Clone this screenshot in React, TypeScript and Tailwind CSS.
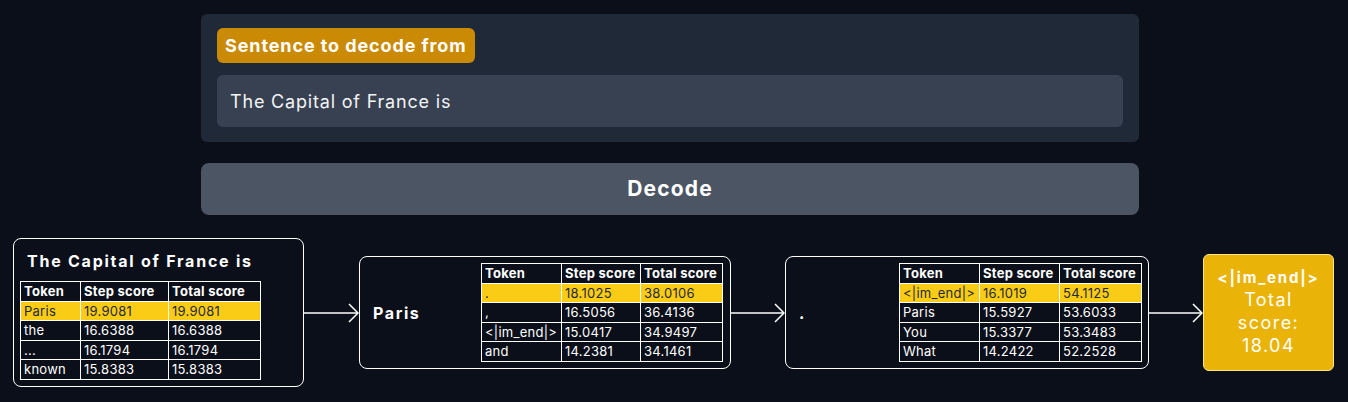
import React from "react"

type Row = [string, string, string]

const font = { fontFamily: "Inter, 'Noto Sans', sans-serif" }

function ScoreTable({ rows, widths }: { rows: Row[]; widths: [string, string, string] }) {
  return (
    <table className="w-fit table-fixed border-collapse text-[13px] leading-[18.6px] tracking-[0.02em]">
      <colgroup>
        <col className={widths[0]} />
        <col className={widths[1]} />
        <col className={widths[2]} />
      </colgroup>
      <thead>
        <tr>
          <th className="border border-white px-[3px] text-left font-bold text-white">Token</th>
          <th className="border border-white px-[3px] text-left font-bold text-white whitespace-nowrap">Step score</th>
          <th className="border border-white px-[3px] text-left font-bold text-white whitespace-nowrap">Total score</th>
        </tr>
      </thead>
      <tbody>
        {rows.map((r, i) => (
          <tr key={i} className={i === 0 ? "bg-[#facc15] text-[#1f2937]" : "text-white"}>
            {r.map((c, j) => (
              <td key={j} className="border border-white px-[3px] whitespace-nowrap">
                {c}
              </td>
            ))}
          </tr>
        ))}
      </tbody>
    </table>
  )
}

function Arrow({ w = 55 }: { w?: number }) {
  return (
    <svg width={w} height="20" viewBox={`0 0 ${w} 20`} className="shrink-0">
      <line x1="0" y1="10" x2={w - 1} y2="10" stroke="white" strokeWidth="1.3" />
      <polyline points={`${w - 10},1 ${w - 1},10 ${w - 10},19`} fill="none" stroke="white" strokeWidth="1.5" />
    </svg>
  )
}

export default function App() {
  return (
    <div className="min-h-[402px] w-full bg-[#0b0f19] pt-[14px]" style={font}>
      <div className="ml-[201px] w-[938px]">
        <div className="rounded-md bg-[#1f2937] px-4 pt-[14px] pb-[15px]">
          <div className="inline-flex h-[35px] items-center rounded-md bg-[#ca8a04] px-2 text-[18px] font-bold tracking-[0.05em] text-white">
            Sentence to decode from
          </div>
          <div className="mt-3 flex h-[52px] items-center rounded-md bg-[#374151] px-[13px] text-[18px] tracking-[0.045em] text-[#f3f4f6]">
            The Capital of France is
          </div>
        </div>
        <button className="mt-[21px] flex h-[52px] w-full items-center justify-center rounded-lg bg-[#4b5563] text-[21px] font-bold tracking-[0.055em] text-white">
          Decode
        </button>
      </div>

      <div className="mt-[23px] ml-[13px] flex items-center">
        <div className="flex h-[149px] w-[291px] flex-col items-start justify-end rounded-lg border border-white px-[6px] pb-[6px]">
          <div className="mb-[8px] pl-[7px] text-[16px] font-bold tracking-[0.11em] text-white">
            The Capital of France is
          </div>
          <ScoreTable
            widths={["w-[60px]", "w-[88px]", "w-[92px]"]}
            rows={[
              ["Paris", "19.9081", "19.9081"],
              ["the", "16.6388", "16.6388"],
              ["...", "16.1794", "16.1794"],
              ["known", "15.8383", "15.8383"],
            ]}
          />
        </div>

        <Arrow />

        <div className="flex h-[113px] w-[372px] items-center justify-between rounded-lg border border-white pr-[7px] pl-[13px]">
          <div className="text-[16px] font-bold tracking-[0.1em] text-white">Paris</div>
          <ScoreTable
            widths={["w-[80px]", "w-[79px]", "w-[82px]"]}
            rows={[
              [".", "18.1025", "38.0106"],
              [",", "16.5056", "36.4136"],
              ["<|im_end|>", "15.0417", "34.9497"],
              ["and", "14.2381", "34.1461"],
            ]}
          />
        </div>

        <Arrow w={54} />

        <div className="flex h-[113px] w-[364px] items-center justify-between rounded-lg border border-white pr-[6px] pl-[13px]">
          <div className="text-[16px] font-bold tracking-[0.08em] text-white">.</div>
          <ScoreTable
            widths={["w-[80px]", "w-[80px]", "w-[82px]"]}
            rows={[
              ["<|im_end|>", "16.1019", "54.1125"],
              ["Paris", "15.5927", "53.6033"],
              ["You", "15.3377", "53.3483"],
              ["What", "14.2422", "52.2528"],
            ]}
          />
        </div>

        <Arrow w={54} />

        <div className="flex h-[117px] w-[131px] flex-col items-center justify-center rounded-md border border-[#fde68a] bg-[#eab308] px-2 text-center text-white">
          <div className="text-[15px] font-bold leading-[20px] tracking-[0.12em]">&lt;|im_end|&gt;</div>
          <div className="text-[18px] leading-[23px] tracking-[0.08em]">
            Total
            <br />
            score:
            <br />
            18.04
          </div>
        </div>
      </div>
    </div>
  )
}
